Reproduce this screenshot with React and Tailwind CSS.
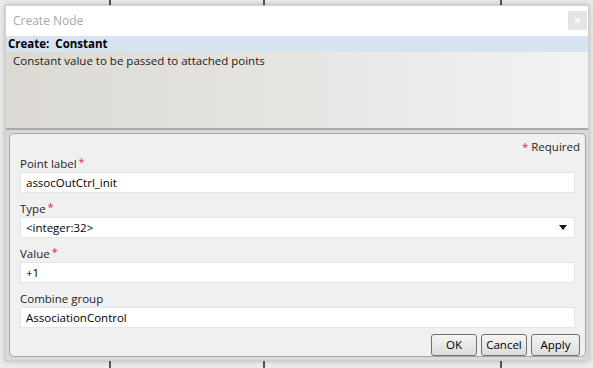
import React from "react";

const font = { fontFamily: '"Open Sans", "Noto Sans", sans-serif' };

const Field = ({ label, required, value, select }) => (
  <div className="flex flex-col">
    <div className="h-[16px] leading-[16px] text-[11.5px] text-[#1e1e1e] flex items-start">
      {label}
      {required && <span className="text-[#e0283c] text-[11px] leading-[12px] ml-[2px]">*</span>}
    </div>
    <div className="h-[21px] bg-white border border-[#e2e7ed] flex items-center justify-between px-[5px] text-[11.5px] text-black">
      <span>{value}</span>
      {select && (
        <svg width="8" height="5" viewBox="0 0 8 5" className="mr-[2px]">
          <path d="M0 0 L8 0 L4 5 Z" fill="#111" />
        </svg>
      )}
    </div>
  </div>
);

const Button = ({ children, w }) => (
  <button
    className={`h-[22px] ${w} rounded-[3px] border border-[#707070] bg-gradient-to-b from-[#f4f4f4] to-[#dcdcdc] text-[11.5px] text-black flex items-center justify-center`}
  >
    {children}
  </button>
);

export default function App() {
  // background canvas lines behind the dialog
  const lines = [109, 263, 500];

  return (
    <div className="relative w-[593px] h-[368px] bg-[#ececec] overflow-hidden" style={font}>
      {lines.map((x) => (
        <div key={x} className="absolute top-0 bottom-0 w-[2px] bg-[#555]" style={{ left: x }} />
      ))}

      <div className="relative ml-[5px] mt-[5px] w-[584px] h-[356px] flex flex-col bg-[#f0f0f0] border border-[#cfcfcf] shadow-[0_0_6px_rgba(0,0,0,0.25)]">
        {/* title bar */}
        <div className="h-[30px] bg-white flex items-center justify-between pl-[7px] pr-[1px]">
          <span className="text-[12px] text-[#a8a8a8]">Create Node</span>
          <div className="w-[19px] h-[19px] bg-[#e4e4e4] flex items-center justify-center">
            <svg width="7" height="7" viewBox="0 0 7 7">
              <path d="M1 1 L6 6 M6 1 L1 6" stroke="#fff" strokeWidth="1.6" />
            </svg>
          </div>
        </div>

        {/* header */}
        <div className="h-[16px] bg-[#d6e3f0] flex items-center pl-[2px] text-[11.5px] font-bold text-black">
          Create:&nbsp; Constant
        </div>
        <div className="h-[77px] bg-gradient-to-r from-[#dcd9d3] via-[#e6e5e2] to-[#f3f3f3] pl-[7px] text-[11.5px] text-[#1a1a1a] leading-[18px]">
          Constant value to be passed to attached points
        </div>

        {/* splitter */}
        <div className="h-[3px] bg-[#a9a9a9] border-b border-[#d8d8d8]" />

        {/* form */}
        <div className="flex-1 flex pl-[3px] pr-[2px] pt-[2px] pb-[3px] bg-[#d9d9d9]">
          <div className="flex-1 rounded-[5px] border border-[#a6a6a6] bg-[#f0f0f0] flex flex-col px-[10px] pt-[5px]">
            <div className="flex justify-end text-[11.5px] text-[#1e1e1e] leading-[16px] -mr-[5px]">
              <span className="text-[#e0283c] mr-[3px]">*</span>Required
            </div>
            <div className="flex flex-col gap-[8px] mt-[1px]">
              <Field label="Point label" required value="assocOutCtrl_init" />
              <Field label="Type" required value="<integer:32>" select />
              <Field label="Value" required value="+1" />
              <Field label="Combine group" value="AssociationControl" />
            </div>
            <div className="flex justify-end gap-[4px] mt-[6px] -mr-[5px]">
              <Button w="w-[46px]">OK</Button>
              <Button w="w-[46px]">Cancel</Button>
              <Button w="w-[49px]">Apply</Button>
            </div>
          </div>
        </div>
      </div>
    </div>
  );
}
